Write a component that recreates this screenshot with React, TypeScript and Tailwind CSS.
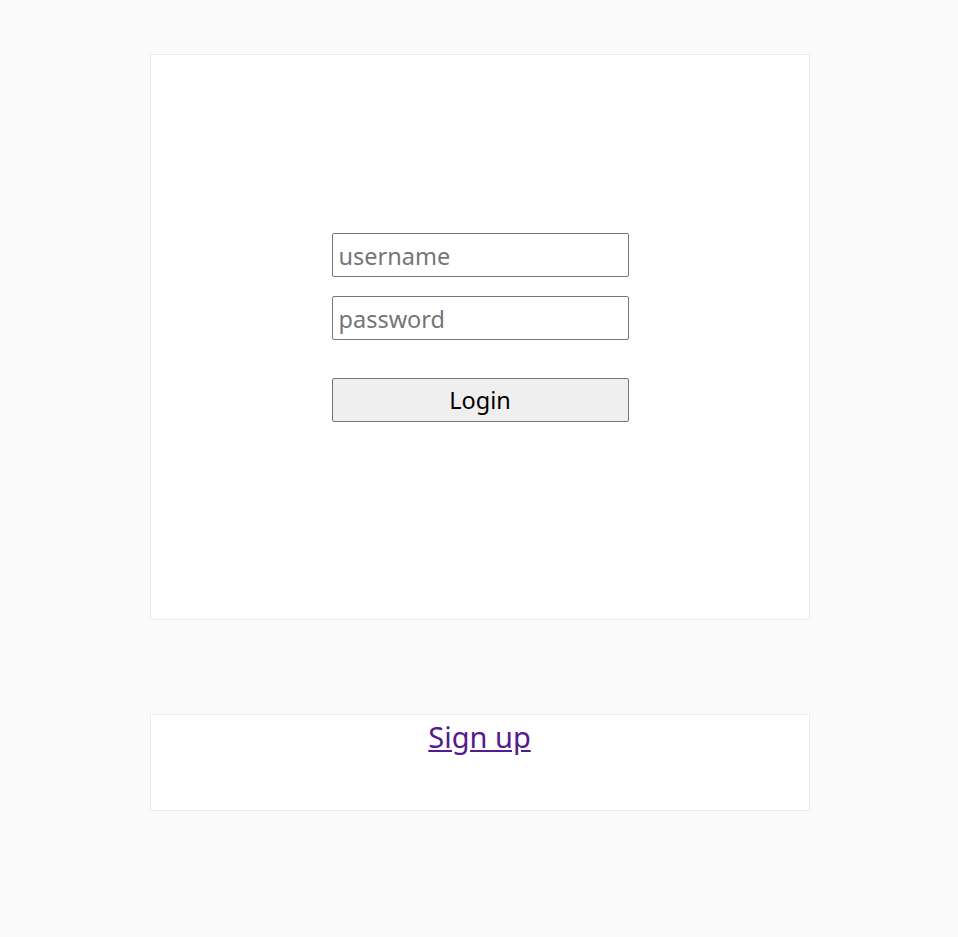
export default function App() {
  return (
    <div className="min-h-[937px] bg-[#fafafa] pt-[54px] pl-px font-['Noto_Sans','Open_Sans',sans-serif]">
      <div className="mx-auto w-[660px] h-[566px] bg-white border border-[#ececec] pt-[178px]">
        <form className="ml-[181px] w-[297px] flex flex-col" onSubmit={(e) => e.preventDefault()}>
          <input
            type="text"
            placeholder="username"
            className="h-[44px] border border-[#767676] rounded-[2px] px-[6px] pt-[2px] text-[23.5px] text-black placeholder:text-[#767676] outline-none"
          />
          <input
            type="password"
            placeholder="password"
            className="mt-[19px] h-[44px] border border-[#767676] rounded-[2px] px-[6px] pt-[2px] text-[23.5px] text-black placeholder:text-[#767676] outline-none"
          />
          <button
            type="submit"
            className="mt-[38px] h-[44px] border border-[#767676] rounded-[2px] bg-[#efefef] pt-[2px] text-[23.5px] text-black"
          >
            Login
          </button>
        </form>
      </div>
      <div className="mx-auto mt-[94px] w-[660px] h-[97px] bg-white border border-[#ececec] text-center">
        <a href="#" className="text-[29px] text-[#551a8b] underline leading-[44px]">
          Sign up
        </a>
      </div>
    </div>
  );
}
